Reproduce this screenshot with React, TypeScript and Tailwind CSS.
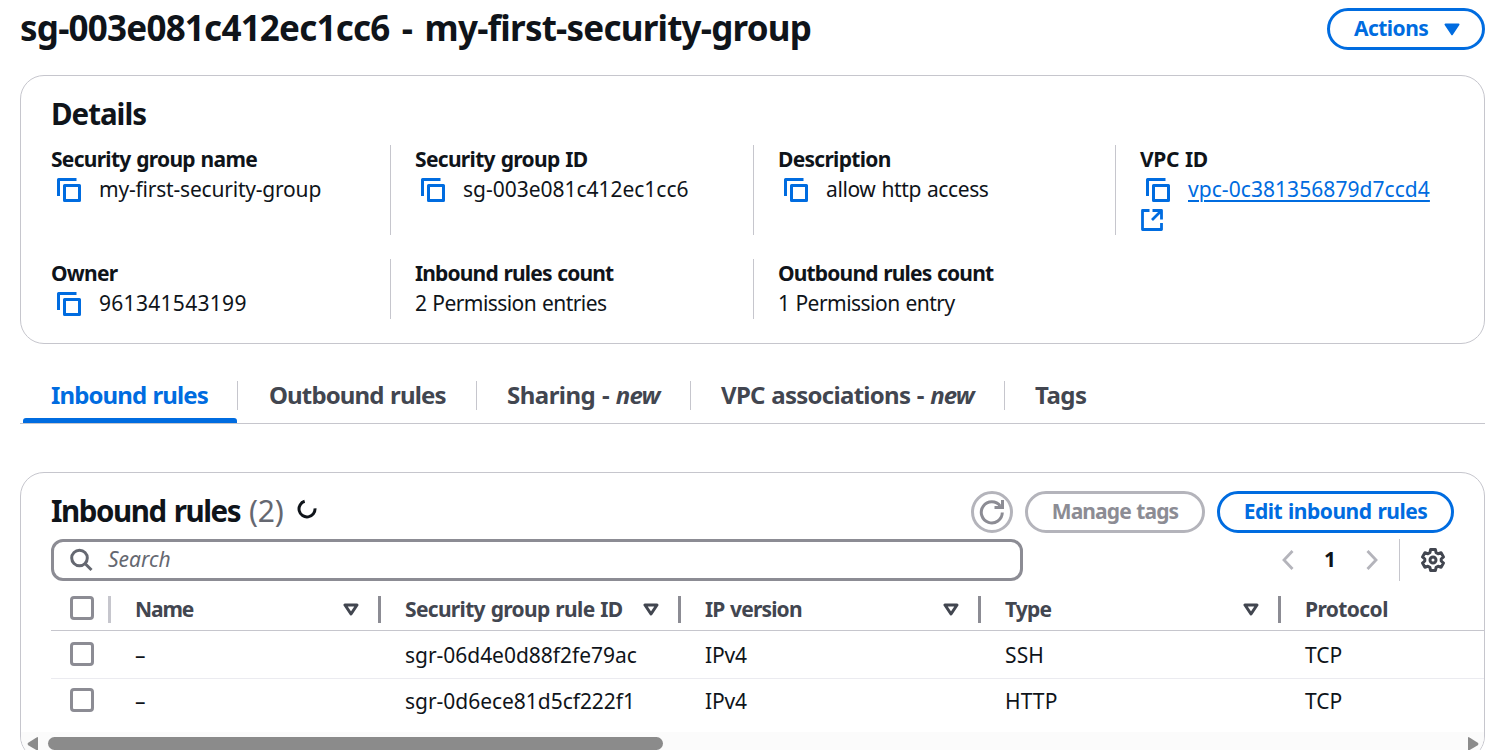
import type { ReactNode } from "react";

function CopyIcon() {
  return (
    <svg width="24" height="24" viewBox="0 0 24 24" fill="none" stroke="#006ce0" strokeWidth="3" strokeLinejoin="round" className="shrink-0">
      <path d="M1.5 18V1.5H19.5" />
      <rect x="7.5" y="7.5" width="15" height="15" />
    </svg>
  );
}

function ExternalIcon() {
  return (
    <svg width="22" height="22" viewBox="0 0 22 22" fill="none" stroke="#006ce0" strokeWidth="2.8" strokeLinejoin="round">
      <path d="M8.5 1.5H1.5V20.5H20.5V14" />
      <path d="M11.5 1.5H20.5V10.5M20 2L11 11" />
    </svg>
  );
}

function SortIcon() {
  return (
    <svg width="16" height="13" viewBox="0 0 16 13" fill="none" stroke="#424650" strokeWidth="3" strokeLinejoin="round">
      <path d="M2 2H14L8 11Z" />
    </svg>
  );
}

function Checkbox() {
  return <span className="block size-6 rounded-[4px] border-3 border-[#8c8c94] bg-white" />;
}

function Field({ label, track, first, children }: { label: string; track: string; first?: boolean; children: ReactNode }) {
  return (
    <div className={first ? "" : "border-l border-[#c6c6cd] pl-6"}>
      <div className={`pb-0.5 leading-7 font-bold [word-spacing:1px] ${track}`}>{label}</div>
      {children}
    </div>
  );
}

function CopyValue({ children }: { children: ReactNode }) {
  return (
    <div className="flex h-[30px] items-center pl-1.5">
      <CopyIcon />
      <div className="pb-0.5 pl-[18px]">{children}</div>
    </div>
  );
}

function HeaderCell({ label, track, width }: { label: string; track: string; width: string }) {
  return (
    <div className={`flex h-[27px] shrink-0 items-center justify-between border-r-3 border-[#8c8c94] pr-[19px] pl-6 ${width}`}>
      <span className={`pb-0.5 ${track}`}>{label}</span>
      <SortIcon />
    </div>
  );
}

const rows = [
  { id: "sgr-06d4e0d88f2fe79ac", type: "SSH", typeTrack: "tracking-[0.1px]" },
  { id: "sgr-0d6ece81d5cf222f1", type: "HTTP", typeTrack: "tracking-[0.1px]" },
];

export default function App() {
  return (
    <div className="h-[750px] w-[1500px] overflow-hidden bg-white pr-[15px] pl-5 font-['Noto_Sans',sans-serif] text-[21px] leading-[30px] whitespace-nowrap text-[#0f141a]">
      <header className="flex h-[75px] justify-between">
        <h1 className="pt-[5px] text-[35px] leading-[45px] font-bold tracking-[-0.78px] [word-spacing:4px]">sg-003e081c412ec1cc6 - my-first-security-group</h1>
        <button className="mt-2 flex h-[42px] w-[158px] items-center rounded-full border-3 border-[#006ce0] pl-6 font-bold text-[#006ce0]">
          <span className="w-[90px] pb-0.5 text-left tracking-[-0.55px]">Actions</span>
          <svg width="16" height="13" viewBox="0 0 16 13" fill="#006ce0" stroke="#006ce0" strokeWidth="2" strokeLinejoin="round">
            <path d="M1.5 1.5H14.5L8 11.3Z" />
          </svg>
        </button>
      </header>

      <section className="h-[269px] rounded-3xl border border-[#c6c6cd] pt-5 pl-[30px]">
        <h2 className="text-[29.5px] leading-9 font-bold tracking-[-1.02px]">Details</h2>
        <div className="mt-[13px] grid grid-cols-[339px_363px_362px_330px] gap-y-6">
          <Field label="Security group name" track="tracking-[-0.73px]" first>
            <CopyValue><span className="tracking-[-0.2px]">my-first-security-group</span></CopyValue>
            <div className="h-[30px]" />
          </Field>
          <Field label="Security group ID" track="tracking-[-0.68px]">
            <CopyValue><span className="tracking-[-0.02px]">sg-003e081c412ec1cc6</span></CopyValue>
          </Field>
          <Field label="Description" track="tracking-[-0.71px]">
            <CopyValue><span className="tracking-[-0.4px] [word-spacing:1px]">allow http access</span></CopyValue>
          </Field>
          <Field label="VPC ID" track="tracking-[-0.4px]">
            <CopyValue>
              <a href="#" className="tracking-[0.06px] text-[#006ce0] underline decoration-2 underline-offset-[3px]">vpc-0c381356879d7ccd4</a>
            </CopyValue>
            <div className="flex h-[30px] items-center pl-px">
              <ExternalIcon />
            </div>
          </Field>
          <Field label="Owner" track="tracking-[-0.75px]" first>
            <CopyValue><span className="tracking-[0.3px]">961341543199</span></CopyValue>
          </Field>
          <Field label="Inbound rules count" track="tracking-[-0.85px]">
            <div className="leading-7 tracking-[-0.57px] [word-spacing:1px]">2 Permission entries</div>
          </Field>
          <Field label="Outbound rules count" track="tracking-[-0.84px]">
            <div className="leading-7 tracking-[-0.53px] [word-spacing:1px]">1 Permission entry</div>
          </Field>
        </div>
      </section>

      <nav className="mt-[37px] flex h-[43px] border-b border-[#c6c6cd] text-[24px] font-bold text-[#424650] [word-spacing:1px]">
        <div className="flex w-[217px] flex-col text-[#006ce0]">
          <div className="flex h-[29px] items-center pb-0.5 pl-[31px] tracking-[-0.9px]">Inbound rules</div>
          <div className="mt-[8px] ml-[3px] h-[5px] w-[214px] rounded-t-[3px] bg-[#006ce0]" />
        </div>
        <div className="flex h-[29px] w-[239px] items-center border-l border-[#c6c6cd] pb-0.5 pl-[31px] tracking-[-0.86px]">Outbound rules</div>
        <div className="flex h-[29px] w-[214px] items-center border-l border-[#c6c6cd] pb-0.5 pl-[30px]">
          <span className="tracking-[-0.52px] whitespace-pre">Sharing - </span>
          <i className="tracking-[-0.83px]">new</i>
        </div>
        <div className="flex h-[29px] w-[314px] items-center border-l border-[#c6c6cd] pb-0.5 pl-[30px]">
          <span className="tracking-[-0.72px] whitespace-pre">VPC associations - </span>
          <i className="tracking-[-0.95px]">new</i>
        </div>
        <div className="flex h-[29px] items-center border-l border-[#c6c6cd] pb-0.5 pl-[30px] tracking-[-0.5px]">Tags</div>
      </nav>

      <section className="mt-12 flex h-[288px] flex-col overflow-hidden rounded-3xl border border-[#c6c6cd]">
        <div className="mt-[18px] flex h-[42px] shrink-0 items-center pr-[30px] pl-[30px]">
          <h2 className="w-[198px] pb-0.5 text-[29.5px] leading-9 font-bold tracking-[-1.45px] [word-spacing:2px]">Inbound rules</h2>
          <span className="pb-0.5 text-[30px] leading-9 tracking-[-0.2px] text-[#656871]">(2)</span>
          <svg width="20" height="20" viewBox="0 0 20 20" fill="none" stroke="#0f141a" strokeWidth="3" className="mb-1.5 ml-[13px] shrink-0">
            <path d="M7.7 2.3A8 8 0 1 0 18 9.3" />
          </svg>
          <div className="flex-1" />
          <button className="flex size-[42px] items-center justify-center rounded-full border-3 border-[#b4b4bb]">
            <svg width="26" height="26" viewBox="0 0 26 26" fill="none" stroke="#8c8c94" strokeWidth="3">
              <path d="M23.3 13.5A10.5 10.5 0 1 1 21.3 7.2" />
              <path d="M23.5 1V8.5H15.5" />
            </svg>
          </button>
          <button className="ml-3 h-[42px] w-[180px] rounded-full border-3 border-[#b4b4bb] pb-0.5 font-bold tracking-[-0.9px] text-[#8c8c94] [word-spacing:1px]">Manage tags</button>
          <button className="ml-3 h-[42px] w-[237px] rounded-full border-3 border-[#006ce0] pb-0.5 font-bold tracking-[-0.5px] text-[#006ce0] [word-spacing:1px]">Edit inbound rules</button>
        </div>

        <div className="mt-1.5 flex h-[42px] shrink-0 items-center pl-[30px]">
          <div className="flex h-[42px] w-[972px] items-center rounded-xl border-3 border-[#8c8c94] pl-[15px]">
            <svg width="24" height="24" viewBox="0 0 24 24" fill="none" stroke="#656871" strokeWidth="3">
              <circle cx="10.5" cy="10" r="7.8" />
              <path d="M16 15.5L22.5 22" />
            </svg>
            <span className="pb-0.5 pl-[15px] text-[#656871] italic">Search</span>
          </div>
          <div className="ml-[259px] flex items-center">
            <svg width="12" height="20" viewBox="0 0 12 20" fill="none" stroke="#b4b4bb" strokeWidth="2.8">
              <path d="M10.5 1L2 10L10.5 19" />
            </svg>
            <span className="w-[72px] pb-0.5 text-center font-bold">1</span>
            <svg width="12" height="20" viewBox="0 0 12 20" fill="none" stroke="#b4b4bb" strokeWidth="2.8">
              <path d="M1.5 1L10 10L1.5 19" />
            </svg>
            <div className="ml-[21px] h-[42px] w-px bg-[#c6c6cd]" />
            <svg width="26" height="26" viewBox="0 0 26 26" fill="none" stroke="#424650" strokeWidth="3" strokeLinejoin="round" className="ml-5">
              <path d="M10.6 2.5H15.4L16.1 5.6L18.1 6.7L21.1 5.8L23.5 9.9L21.2 12V14L23.5 16.1L21.1 20.2L18.1 19.3L16.1 20.4L15.4 23.5H10.6L9.9 20.4L7.9 19.3L4.9 20.2L2.5 16.1L4.8 14V12L2.5 9.9L4.9 5.8L7.9 6.7L9.9 5.6Z" />
              <circle cx="13" cy="13" r="3" />
            </svg>
          </div>
        </div>

        <div className="ml-[30px] flex h-[50px] shrink-0 items-start border-b border-[#c6c6cd] pt-[15px] font-bold text-[#424650]">
          <div className="flex h-[27px] w-[60px] shrink-0 items-center border-r-3 border-[#c6c6cd] pb-[3px] pl-[19px]">
            <Checkbox />
          </div>
          <HeaderCell label="Name" track="tracking-[-1.1px]" width="w-[270px]" />
          <HeaderCell label="Security group rule ID" track="tracking-[-0.68px] [word-spacing:1px]" width="w-[300px]" />
          <HeaderCell label="IP version" track="tracking-[-0.85px] [word-spacing:1px]" width="w-[300px]" />
          <HeaderCell label="Type" track="tracking-[-0.85px]" width="w-[300px]" />
          <div className="pl-6 leading-[27px] tracking-[-0.6px]">Protocol</div>
        </div>

        {rows.map((r, i) => (
          <div key={r.id} className={`ml-[30px] flex shrink-0 items-center ${i === 0 ? "h-12 border-b border-[#ebebf0] pb-0.5" : "h-[45px] pb-[3px]"}`}>
            <div className="w-[84px] shrink-0 pl-[19px]"><Checkbox /></div>
            <div className="w-[270px] shrink-0 pt-0.5">–</div>
            <div className="w-[300px] shrink-0 pt-0.5 tracking-[-0.03px]">{r.id}</div>
            <div className="w-[300px] shrink-0 pt-0.5 tracking-[-0.2px]">IPv4</div>
            <div className={`w-[300px] shrink-0 pt-0.5 ${r.typeTrack}`}>{r.type}</div>
            <div className="pt-0.5">TCP</div>
          </div>
        ))}

        <div className="mt-[8px] flex flex-1 items-start bg-[#fbfbfb] pt-[5px]">
          <svg width="12" height="14" viewBox="0 0 12 14" fill="#8b8b8b" className="ml-1.5 shrink-0">
            <path d="M11 0V14L1.2 8.2Q0 7 1.2 5.8L9.5 .5Q10.5 0 11 0Z" />
          </svg>
          <div className="ml-[9px] h-[13px] w-[615px] rounded-full bg-[#8b8b8b]" />
          <div className="flex-1" />
          <svg width="12" height="14" viewBox="0 0 12 14" fill="#8b8b8b" className="mr-[5px] shrink-0">
            <path d="M1 0V14L10.8 8.2Q12 7 10.8 5.8L2.5 .5Q1.5 0 1 0Z" />
          </svg>
        </div>
      </section>
    </div>
  );
}
